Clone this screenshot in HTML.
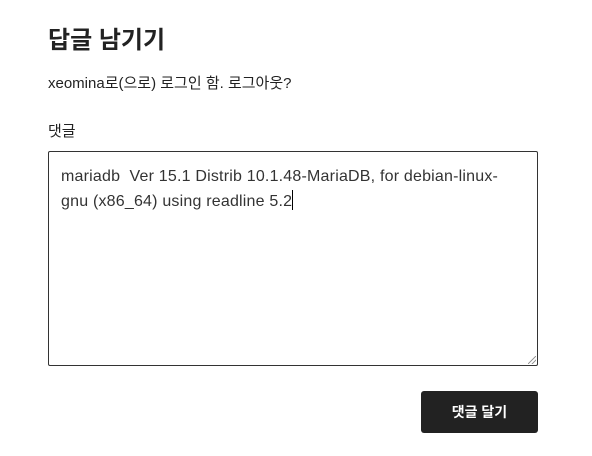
<!DOCTYPE html>
<html><head><meta charset="utf-8"><style>
body{margin:0;background:#fff;width:592px;height:456px;overflow:hidden;font-family:"Liberation Sans","Noto Sans CJK KR",sans-serif;color:#222;}
.t{position:absolute;left:48px;top:25px;font-size:24px;font-weight:bold;line-height:32px;color:#222;}
.l{position:absolute;left:48px;top:73px;font-size:15px;line-height:22px;}
.c{position:absolute;left:48px;top:121px;font-size:15px;line-height:22px;}
.ta{position:absolute;left:48px;top:151px;width:488px;height:213px;border:1px solid #333;border-radius:2px;box-sizing:content-box;}
.tx{position:absolute;left:12px;top:12px;width:470px;font-size:16px;letter-spacing:0.2px;line-height:25px;color:#333;white-space:nowrap;}
.cur{display:inline-block;width:1px;height:20px;background:#000;vertical-align:-4px;}
.b{position:absolute;left:421px;top:391px;width:117px;height:42px;background:#222;border-radius:3px;color:#fff;font-size:14px;font-weight:bold;text-align:center;line-height:42px;}
.rz{position:absolute;right:1px;bottom:1px;width:8px;height:8px;background:linear-gradient(135deg,transparent 45%,#999 45%,#999 55%,transparent 55%,transparent 70%,#999 70%,#999 80%,transparent 80%);}
</style></head><body>
<div class="t">답글 남기기</div>
<div class="l">xeomina로(으로) 로그인 함. 로그아웃?</div>
<div class="c">댓글</div>
<div class="ta"><div class="tx">mariadb&nbsp; Ver 15.1 Distrib 10.1.48-MariaDB, for debian-linux-<br>gnu (x86_64) using readline 5.2<span class="cur"></span></div><div class="rz"></div></div>
<div class="b">댓글 달기</div>
</body></html>
